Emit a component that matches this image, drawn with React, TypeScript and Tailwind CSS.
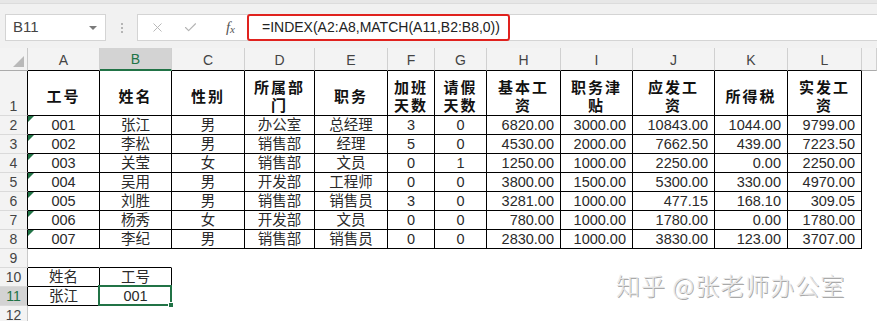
import { X, Check } from "lucide-react";

const colWidths = "grid-cols-[28px_72px_72px_73px_70px_73px_47px_52px_74px_72px_82px_73px_74px_1fr]";
const letters = ["A", "B", "C", "D", "E", "F", "G", "H", "I", "J", "K", "L", ""];

const head = [
  "工号", "姓名", "性别", "所属部\n门", "职务", "加班\n天数", "请假\n天数",
  "基本工\n资", "职务津\n贴", "应发工\n资", "所得税", "实发工\n资",
];

const data = [
  ["001", "张江", "男", "办公室", "总经理", "3", "0", "6820.00", "3000.00", "10843.00", "1044.00", "9799.00"],
  ["002", "李松", "男", "销售部", "经理", "5", "0", "4530.00", "2000.00", "7662.50", "439.00", "7223.50"],
  ["003", "关莹", "女", "销售部", "文员", "0", "1", "1250.00", "1000.00", "2250.00", "0.00", "2250.00"],
  ["004", "吴用", "男", "开发部", "工程师", "0", "0", "3800.00", "1500.00", "5300.00", "330.00", "4970.00"],
  ["005", "刘胜", "男", "销售部", "销售员", "3", "0", "3281.00", "1000.00", "477.15", "168.10", "309.05"],
  ["006", "杨秀", "女", "开发部", "文员", "0", "0", "780.00", "1000.00", "1780.00", "0.00", "1780.00"],
  ["007", "李纪", "男", "销售部", "销售员", "0", "0", "2830.00", "1000.00", "3830.00", "123.00", "3707.00"],
];

// cells that belong to a bordered block
const inT = (r: number, c: number) =>
  (r >= 1 && r <= 8 && c >= 1 && c <= 12) || (r >= 10 && r <= 11 && c >= 1 && c <= 2);

function cellText(r: number, c: number): string {
  if (r === 1 && c >= 1 && c <= 12) return head[c - 1];
  if (r >= 2 && r <= 8 && c >= 1 && c <= 12) return data[r - 2][c - 1];
  if (r === 10) return c === 1 ? "姓名" : c === 2 ? "工号" : "";
  if (r === 11) return c === 1 ? "张江" : c === 2 ? "001" : "";
  return "";
}

function HeaderRow() {
  return (
    <>
      <div className="h-[23px] bg-[#f3f3f3] border-r border-b border-r-[#c8c8c8] border-b-[#ababab] flex items-end justify-end pr-[3px] pb-[3px]">
        <div className="w-0 h-0 border-l-[11px] border-l-transparent border-b-[11px] border-b-[#b9b9b9]" />
      </div>
      {letters.map((l, i) => {
        const c = i + 1;
        return (
          <div
            key={c}
            className={
              "h-[23px] border-r border-r-[#d0d0d0] flex items-center justify-center pt-[2px] text-[14px] " +
              (c === 2
                ? "bg-[#d3d3d3] border-b-2 border-b-[#217346] text-[#217346]"
                : "bg-[#f3f3f3] border-b text-[#444] " + (inT(1, c) ? "border-b-black" : "border-b-[#ababab]"))
            }
          >
            {l}
          </div>
        );
      })}
    </>
  );
}

function Row({ r }: { r: number }) {
  const h = r === 1 ? "h-[45px]" : "h-[19px]";
  const cells = [];
  for (let c = 1; c <= 13; c++) {
    const txt = cellText(r, c);
    const right = inT(r, c) || inT(r, c + 1) ? "border-r-black" : "border-r-transparent";
    const bottom = inT(r, c) || inT(r + 1, c) ? "border-b-black" : "border-b-transparent";
    const numeric = r >= 2 && r <= 8 && c >= 8;
    let align = "justify-center items-end";
    if (numeric) align = "justify-end items-end pr-[6px]";
    if (r === 1) align = "justify-center items-center pt-[6px]";
    cells.push(
      <div key={c} className={"relative border-r border-b flex " + h + " " + right + " " + bottom + " " + align}>
        {r === 1 ? (
          <span className="whitespace-pre-line text-center font-bold text-[15px] leading-[18.5px] tracking-[2px] text-[#111] [font-family:'Noto_Sans_CJK_SC',sans-serif]">
            {txt}
          </span>
        ) : (
          <span className="text-[14.5px] leading-[18px] text-[#2a2a2a] whitespace-nowrap">{txt}</span>
        )}
        {c === 1 && r >= 2 && r <= 8 && (
          <div className="absolute left-0 top-0 w-0 h-0 border-t-[6px] border-t-[#217346] border-r-[6px] border-r-transparent" />
        )}
        {c === 2 && r === 11 && (
          <div className="absolute -left-[2px] -top-[2px] -right-[1px] -bottom-[1px] border-2 border-[#217346]">
            <div className="absolute -right-[4px] -bottom-[4px] w-[6px] h-[6px] bg-[#217346] border border-white" />
          </div>
        )}
      </div>
    );
  }
  return (
    <>
      <div
        className={
          "border-r border-b border-b-[#dadada] flex items-end justify-center text-[14px] leading-[18px] " +
          h + " " +
          (inT(r, 1) ? "border-r-black " : "border-r-[#c8c8c8] ") +
          (r === 11 ? "bg-[#d3d3d3] text-[#217346]" : "bg-[#f3f3f3] text-[#444]")
        }
      >
        {r}
      </div>
      {cells}
    </>
  );
}

export default function App() {
  return (
    <div className="relative w-[877px] h-[321px] overflow-hidden bg-white [font-family:'Liberation_Sans','Noto_Sans_CJK_SC',sans-serif]">
      {/* toolbar */}
      <div className="h-[48px] bg-[#f1f1f1] flex flex-col">
        <div className="h-[4px] bg-[#e7e7e7] border-b border-[#dcdcdc]" />
        <div className="flex items-start pt-[10px] pl-[5px]">
          <div className="w-[101px] h-[27px] bg-white border border-[#d4d4d4] flex items-center pl-[7px] pr-[8px]">
            <span className="text-[15px] text-[#444] flex-1">B11</span>
            <div className="w-0 h-0 border-l-[4px] border-r-[4px] border-t-[4px] border-l-transparent border-r-transparent border-t-[#7a7a7a]" />
          </div>
          <div className="w-[31px] h-[27px] flex flex-col items-center justify-center gap-[2px]">
            <div className="w-[2px] h-[2px] bg-[#b5b5b5]" />
            <div className="w-[2px] h-[2px] bg-[#b5b5b5]" />
            <div className="w-[2px] h-[2px] bg-[#b5b5b5]" />
          </div>
          <div className="flex-1 h-[27px] bg-white border border-r-0 border-[#d4d4d4] flex items-stretch">
            <div className="w-[39px] flex items-center justify-center text-[#b4b4b4]">
              <X size={15} strokeWidth={1.5} />
            </div>
            <div className="w-[26px] flex items-center justify-center text-[#b4b4b4]">
              <Check size={15} strokeWidth={1.8} />
            </div>
            <div className="w-[44px] flex items-center justify-end pr-[12px] text-[#555] italic [font-family:'Liberation_Serif',serif]">
              <span className="text-[15px]">f</span>
              <span className="text-[11px] mt-[3px]">x</span>
            </div>
            <div className="w-[263px] -mt-[1px] h-[27px] border-2 border-[#e0221e] rounded-[3px] flex items-center pl-[13px] text-[14px] text-[#222]">
              =INDEX(A2:A8,MATCH(A11,B2:B8,0))
            </div>
          </div>
        </div>
      </div>

      {/* sheet */}
      <div className={"grid " + colWidths}>
        <HeaderRow />
        {[1, 2, 3, 4, 5, 6, 7, 8, 9, 10, 11, 12].map((r) => (
          <Row key={r} r={r} />
        ))}
      </div>

      {/* watermark */}
      <div className="absolute left-[616px] top-[271px] text-[24px] leading-[28px] tracking-[1px] font-light text-[#e6e6e6] [text-shadow:1px_1px_0_#a9a9a9] [font-family:'Noto_Sans_CJK_SC',sans-serif] whitespace-nowrap">
        知乎 @张老师办公室
      </div>
    </div>
  );
}
